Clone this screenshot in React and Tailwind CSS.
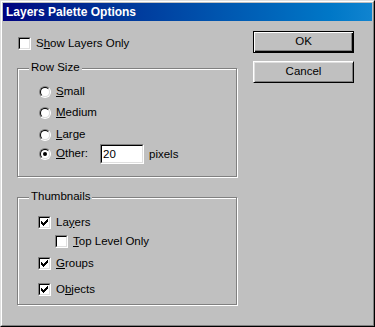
import React from "react";

const CHECK = [
  "......#",
  ".....##",
  "#...###",
  "##.###.",
  "#####..",
  ".###...",
  "..#....",
];

const CheckMark = () => (
  <svg width="7" height="7" viewBox="0 0 7 7" shapeRendering="crispEdges">
    {CHECK.map((row, y) =>
      row.split("").map((c, x) =>
        c === "#" ? <rect key={`${x}-${y}`} x={x} y={y} width="1" height="1" fill="#000" /> : null
      )
    )}
  </svg>
);

const Checkbox = ({ checked }) => (
  <div className="w-[13px] h-[13px] shrink-0 border border-t-[#808080] border-l-[#808080] border-r-white border-b-white">
    <div className="w-full h-full bg-white border border-t-black border-l-black border-r-[#dfdfdf] border-b-[#dfdfdf] flex items-center justify-center">
      {checked && <CheckMark />}
    </div>
  </div>
);

const Radio = ({ checked }) => (
  <div className="w-[12px] h-[12px] shrink-0 rounded-full border border-t-[#808080] border-l-[#808080] border-r-white border-b-white">
    <div className="w-full h-full rounded-full bg-white border border-t-black border-l-black border-r-[#dfdfdf] border-b-[#dfdfdf] flex items-center justify-center">
      {checked && <div className="w-[4px] h-[4px] rounded-full bg-black" />}
    </div>
  </div>
);

// label with one underlined mnemonic letter
const Label = ({ pre = "", u, post = "" }) => (
  <span className="leading-[13px] whitespace-nowrap">
    {pre}
    <span className="underline underline-offset-[1px]">{u}</span>
    {post}
  </span>
);

const Group = ({ title, className = "", children }) => (
  <div className={`border border-[#808080] shadow-[inset_1px_1px_0_#fff,1px_1px_0_#fff] ${className}`}>
    <div className="-mt-[8px] ml-[11px] w-fit px-[2px] bg-[#c0c0c0] leading-[13px]">{title}</div>
    {children}
  </div>
);

const App = () => {
  return (
    <div
      className="w-[375px] h-[327px] border border-t-[#dfdfdf] border-l-[#dfdfdf] border-r-black border-b-black text-[11.5px] text-black"
      style={{ fontFamily: '"Liberation Sans", Arial, sans-serif' }}
    >
      <div className="h-full bg-[#c0c0c0] border border-t-white border-l-white border-r-[#808080] border-b-[#808080] p-[1px] flex flex-col">
        {/* title bar */}
        <div className="h-[18px] shrink-0 flex items-center pl-[3px] bg-gradient-to-r from-[#000080] to-[#1084d0]">
          <span className="text-white font-bold text-[12px] leading-none">Layers Palette Options</span>
        </div>

        <div className="flex flex-row">
          {/* left column */}
          <div className="ml-[14px] w-[220px] pt-[16px] flex flex-col">
            <div className="ml-[1px] flex items-center gap-[5px] h-[13px]">
              <Checkbox />
              <Label pre="S" u="h" post="ow Layers Only" />
            </div>

            <Group title="Row Size" className="mt-[18px] pb-[12px]">
              <div className="pl-[21px] flex flex-col">
                <div className="mt-[11px] flex items-center gap-[5px] h-[13px]">
                  <Radio />
                  <Label u="S" post="mall" />
                </div>
                <div className="mt-[8px] flex items-center gap-[5px] h-[13px]">
                  <Radio />
                  <Label u="M" post="edium" />
                </div>
                <div className="mt-[9px] flex items-center gap-[5px] h-[13px]">
                  <Radio />
                  <Label u="L" post="arge" />
                </div>
                <div className="mt-[3px] flex items-center h-[20px]">
                  <Radio checked />
                  <span className="ml-[5px] w-[44px]">
                    <Label u="O" post="ther:" />
                  </span>
                  <div className="w-[44px] h-[20px] border border-t-[#808080] border-l-[#808080] border-r-white border-b-white">
                    <div className="w-full h-full bg-white border border-t-black border-l-black border-r-[#dfdfdf] border-b-[#dfdfdf] pl-[1px] flex items-center leading-[13px]">
                      20
                    </div>
                  </div>
                  <span className="ml-[5px] leading-[13px]">pixels</span>
                </div>
              </div>
            </Group>

            <Group title="Thumbnails" className="mt-[20px] pb-[8px]">
              <div className="pl-[20px] flex flex-col">
                <div className="mt-[13px] flex items-center gap-[5px] h-[13px]">
                  <Checkbox checked />
                  <Label pre="La" u="y" post="ers" />
                </div>
                <div className="mt-[6px] ml-[17px] flex items-center gap-[5px] h-[13px]">
                  <Checkbox />
                  <Label u="T" post="op Level Only" />
                </div>
                <div className="mt-[9px] flex items-center gap-[5px] h-[13px]">
                  <Checkbox checked />
                  <Label u="G" post="roups" />
                </div>
                <div className="mt-[13px] flex items-center gap-[5px] h-[13px]">
                  <Checkbox checked />
                  <Label pre="O" u="b" post="jects" />
                </div>
              </div>
            </Group>
          </div>

          {/* buttons */}
          <div className="ml-[16px] pt-[10px] flex flex-col gap-[8px]">
            <button className="w-[101px] h-[22px] border border-black shadow-[inset_1px_1px_0_#fff,inset_-1px_-1px_0_#000,inset_-2px_-2px_0_#808080] bg-[#c0c0c0] text-[11.5px] leading-none">
              OK
            </button>
            <button className="w-[101px] h-[22px] border border-t-white border-l-white border-r-black border-b-black shadow-[inset_1px_1px_0_#dfdfdf,inset_-1px_-1px_0_#808080] bg-[#c0c0c0] text-[11.5px] leading-none">
              Cancel
            </button>
          </div>
        </div>
      </div>
    </div>
  );
};

export default App;
